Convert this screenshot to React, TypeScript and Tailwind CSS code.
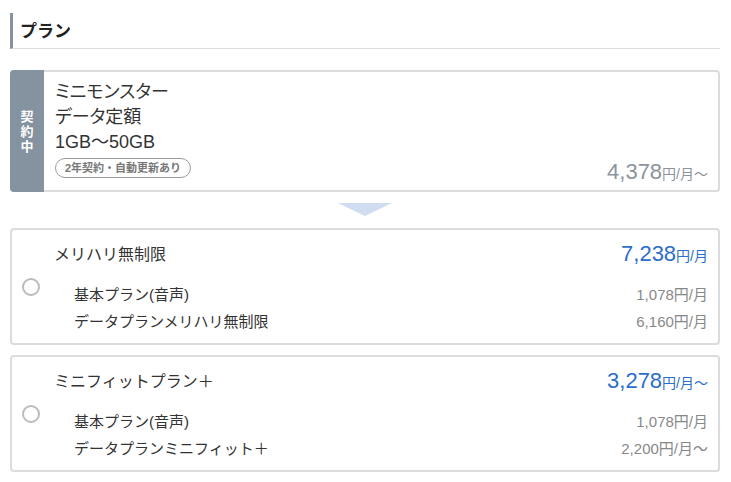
const font = { fontFamily: '"Liberation Sans", "Noto Sans CJK JP", sans-serif' }

type Row = { label: string; price: string; suffix: string }

type Plan = {
  name: string
  price: string
  suffix: string
  rows: Row[]
}

const plans: Plan[] = [
  {
    name: 'メリハリ無制限',
    price: '7,238',
    suffix: '円/月',
    rows: [
      { label: '基本プラン(音声)', price: '1,078', suffix: '円/月' },
      { label: 'データプランメリハリ無制限', price: '6,160', suffix: '円/月' },
    ],
  },
  {
    name: 'ミニフィットプラン＋',
    price: '3,278',
    suffix: '円/月〜',
    rows: [
      { label: '基本プラン(音声)', price: '1,078', suffix: '円/月' },
      { label: 'データプランミニフィット＋', price: '2,200', suffix: '円/月〜' },
    ],
  },
]

function CurrentPlan() {
  return (
    <div className="flex h-[122px] rounded-[4px] border-2 border-[#dcdcdc] bg-white">
      <div className="-my-[2px] -ml-[2px] flex w-[34px] items-center justify-center rounded-l-[4px] bg-[#84939f]">
        <div className="flex flex-col items-center text-[13px] font-bold leading-[15px] text-white">
          <span>契</span>
          <span>約</span>
          <span>中</span>
        </div>
      </div>
      <div className="flex flex-1 items-end justify-between pb-[12px] pl-[11px] pr-[10px] pt-[8px]">
        <div className="flex flex-col self-start [font-feature-settings:'palt']">
          <p className="text-[18px] leading-[25px] text-[#333]">ミニモンスター</p>
          <p className="text-[18px] leading-[25px] text-[#333]">データ定額</p>
          <p className="text-[18px] leading-[25px] text-[#333]">1GB〜50GB</p>
          <span className="mt-[3px] w-fit rounded-full border border-[#9a9a9a] px-[9px] text-[11px] font-bold leading-[18px] text-[#777] [font-feature-settings:normal]">
            2年契約・自動更新あり
          </span>
        </div>
        <p className="-mb-[5px] leading-none text-[#8b949c]">
          <span className="text-[22px]">4,378</span>
          <span className="text-[14px]">円/月〜</span>
        </p>
      </div>
    </div>
  )
}

function PlanCard({ plan }: { plan: Plan }) {
  return (
    <div className="flex h-[117px] items-center rounded-[4px] border-2 border-[#dcdcdc] bg-white pl-[10px] pr-[10px]">
      <div className="h-[18px] w-[18px] shrink-0 rounded-full border-2 border-[#b8bcc0]" />
      <div className="ml-[14px] flex h-full flex-1 flex-col pt-[11px]">
        <div className="flex items-center justify-between leading-[26px]">
          <span className="text-[16px] text-[#333]">{plan.name}</span>
          <span className="text-[#2b6ecb]">
            <span className="text-[22px]">{plan.price}</span>
            <span className="text-[14px]">{plan.suffix}</span>
          </span>
        </div>
        <div className="mt-[12px] flex flex-col">
          {plan.rows.map((row) => (
            <div key={row.label} className="flex items-center justify-between pl-[20px] leading-[27px]">
              <span className="text-[15px] text-[#333]">{row.label}</span>
              <span className="text-[15px] text-[#888]">
                {row.price}
                {row.suffix}
              </span>
            </div>
          ))}
        </div>
      </div>
    </div>
  )
}

export default function App() {
  return (
    <div className="min-h-[482px] w-[731px] bg-white pl-[10px] pr-[11px] pt-[13px]" style={font}>
      <div className="flex h-[36px] items-center border-b border-l-[3px] border-b-[#dddddd] border-l-[#84939f] pl-[7px] pt-[2px]">
        <h2 className="text-[17px] font-bold text-[#222]">プラン</h2>
      </div>

      <div className="mt-[21px]">
        <CurrentPlan />
      </div>

      <div className="flex justify-center pb-[12px] pt-[11px]">
        <div className="h-0 w-0 border-l-[27px] border-r-[27px] border-t-[13px] border-l-transparent border-r-transparent border-t-[#d0dcf0]" />
      </div>

      <div className="flex flex-col gap-[10px]">
        {plans.map((plan) => (
          <PlanCard key={plan.name} plan={plan} />
        ))}
      </div>
    </div>
  )
}
